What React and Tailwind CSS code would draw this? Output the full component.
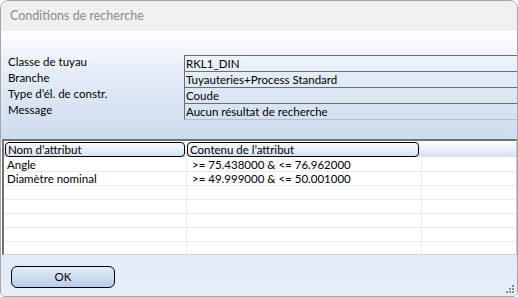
import React from "react";

const fields = [
  ["Classe de tuyau", "RKL1_DIN"],
  ["Branche", "Tuyauteries+Process Standard"],
  ["Type d\u2019\u00e9l. de constr.", "Coude"],
  ["Message", "Aucun r\u00e9sultat de recherche"],
];

const rows = [
  ["Angle", ">= 75.438000 & <= 76.962000"],
  ["Diam\u00e8tre nominal", ">= 49.999000 & <= 50.001000"],
  ["", ""],
  ["", ""],
  ["", ""],
  ["", ""],
  ["", ""],
];

function ResizeGrip() {
  const dots = [
    [8, 0],
    [8, 3],
    [5, 3],
    [8, 6],
    [5, 6],
    [2, 6],
  ];
  return (
    <svg width="11" height="9" className="absolute right-[2px] bottom-[2px]">
      {dots.map(([x, y], i) => (
        <rect key={i} x={x} y={y} width="2" height="2" fill="#8d8d8d" />
      ))}
    </svg>
  );
}

export default function App() {
  return (
    <div className="w-[518px] h-[297px] bg-white font-['Lato',sans-serif] text-[11.5px] text-black">
      <div className="relative h-full flex flex-col border border-[#a6a6a6] rounded-t-[8px] rounded-b-[5px] overflow-hidden">
        <div className="h-[30px] shrink-0 bg-[#f0f0f0] flex items-center px-[9px] text-[12.5px] text-[#8a8a8a]">
          Conditions de recherche
        </div>

        <div className="h-[108px] shrink-0 bg-gradient-to-b from-white via-[#e4ecf7] via-40% to-[#cddcef] pt-[24px]">
          {fields.map(([label, value], i) => (
            <div key={i} className="grid grid-cols-[183px_1fr] h-[16px] leading-[15px]">
              <div className="pl-[7px] -mt-[1px]">{label}</div>
              <div
                className={
                  "border-t border-l border-[#6e6e6e] pl-[1px] pr-[1px] whitespace-nowrap " +
                  (i === fields.length - 1 ? "border-b border-b-[#b4bfcc]" : "")
                }
              >
                {value}
              </div>
            </div>
          ))}
        </div>

        <div className="h-[116px] shrink-0 bg-white border-t-2 border-l-2 border-[#717171] border-r border-r-[#c8c8c8] border-b border-b-[#d5d5d5] ml-[1px]">
          <div className="grid grid-cols-[182px_234px_1fr] h-[16px] bg-gradient-to-b from-white to-[#d3e0f2]">
            <div className="border border-black rounded-[4px] mt-[1px] ml-[1px] mr-[1px] leading-[13px] pl-[2px] h-[15px]">
              Nom d&#8217;attribut
            </div>
            <div className="border border-black rounded-[4px] mt-[1px] ml-[1px] mr-[1px] leading-[13px] pl-[2px] h-[15px]">
              Contenu de l&#8217;attribut
            </div>
            <div />
          </div>
          <div className="mt-[1px]">
            {rows.map(([name, content], i) => (
              <div
                key={i}
                className="grid grid-cols-[183px_235px_1fr] h-[14px] leading-[13px] border-b border-[#ebebeb]"
              >
                <div className="pl-[3px] border-r border-[#ebebeb] whitespace-nowrap">{name}</div>
                <div className="pl-[5px] border-r border-[#ebebeb] whitespace-nowrap">{content}</div>
                <div />
              </div>
            ))}
          </div>
        </div>

        <div className="flex-1 bg-gradient-to-b from-[#e2eaf6] to-[#e8eef8] pl-[10px] pt-[11px]">
          <button className="w-[104px] h-[22px] border border-black rounded-[6px] bg-gradient-to-b from-[#e3ecf8] to-[#b9cde8] text-[11.5px] leading-[20px]">
            OK
          </button>
        </div>
        <ResizeGrip />
      </div>
    </div>
  );
}
